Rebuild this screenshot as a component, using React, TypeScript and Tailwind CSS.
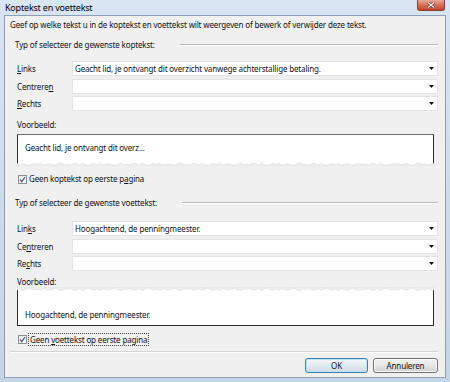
import React from "react";

function Arrow() {
  return (
    <svg width="5" height="3" viewBox="0 0 5 3" className="shrink-0">
      <path d="M0 0H5L2.5 3Z" fill="#111" />
    </svg>
  );
}

function Combo({ value }: { value?: string }) {
  return (
    <div className="flex h-[15px] flex-1 items-center bg-white border border-[#e4e4e4] pl-[2px] pr-[3px]">
      <span className="flex-1 truncate">{value}</span>
      <Arrow />
    </div>
  );
}

function Row({ label, value, className = "" }: { label: React.ReactNode; value?: string; className?: string }) {
  return (
    <div className={"flex items-center h-[15px] " + className}>
      <div className="w-[67px] pl-[12px]">{label}</div>
      <Combo value={value} />
    </div>
  );
}

function U({ children }: { children: React.ReactNode }) {
  return <span className="underline underline-offset-[1px]">{children}</span>;
}

function Check() {
  return (
    <div className="w-[9px] h-[9px] border border-[#8e8f8f] bg-gradient-to-br from-[#e9e9e9] to-[#ffffff] flex items-center justify-center shrink-0">
      <svg width="7" height="7" viewBox="0 0 7 7">
        <path d="M1 3.5L2.8 5.6L6 1" stroke="#4a5f97" strokeWidth="1.3" fill="none" />
      </svg>
    </div>
  );
}

const tornPts: number[] = [2, 0.5, 2.5, 1, 0, 1.5, 2, 1, 2.5, 0.5, 1.5, 2, 1, 0, 2, 2.5, 1, 1.5, 0.5, 2];

function Torn({ top }: { top?: boolean }) {
  const w = 420;
  const n = 140;
  let d = top ? `M0 0 H${w} V2 ` : `M0 5 H${w} V3 `;
  for (let i = n; i >= 0; i--) {
    const x = (i / n) * w;
    const j = tornPts[i % tornPts.length];
    const y = top ? 1 + j : 2 + (2.5 - j);
    d += `L${x.toFixed(1)} ${y.toFixed(1)} `;
  }
  d += "Z";
  return (
    <svg
      width="100%"
      height="5"
      viewBox={`0 0 ${w} 5`}
      preserveAspectRatio="none"
      className={"absolute left-[-1px] w-[calc(100%+2px)] " + (top ? "top-[-1px]" : "bottom-[-1px]")}
    >
      <path d={d} fill="#f0f0f0" stroke="#d8d8d8" strokeWidth="0.5" />
    </svg>
  );
}

export default function App() {
  return (
    <div className="relative w-[450px] h-[382px] flex flex-col bg-gradient-to-b from-[#d9e5f2] via-[#cfdcea] to-[#c6d5e6] text-[8px] leading-[10px] text-[#111] font-['Noto_Sans',sans-serif] tracking-[-0.15px] overflow-hidden">
      <div className="h-[15px] flex items-center pl-[5px] text-[9px] tracking-[-0.2px] text-black">
        Koptekst en voettekst
      </div>
      <div className="absolute top-0 left-[417px] w-[28px] h-[11px] rounded-b-[3px] border border-t-0 border-[#8a3a2a] bg-gradient-to-b from-[#e8a898] via-[#d46f5a] to-[#c0452e] flex items-center justify-center">
        <svg width="8" height="6" viewBox="0 0 8 6">
          <path d="M1 0.5L7 5.5M7 0.5L1 5.5" stroke="#5a1e14" strokeWidth="2.4" />
          <path d="M1 0.5L7 5.5M7 0.5L1 5.5" stroke="#fff" strokeWidth="1.3" />
        </svg>
      </div>
      <div className="flex-1 flex px-[4px] pb-[4px]">
        <div className="flex-1 flex flex-col border border-[#8c9fb6] bg-[#f0f0f0] pr-[7px]">
          <div className="mt-[4px] h-[10px] pl-[5px] whitespace-nowrap">
            Geef op welke tekst u in de koptekst en voettekst wilt weergeven of bewerk of verwijder deze tekst.
          </div>

          <div className="mt-[10px] h-[10px] flex items-center pl-[10px]">
            <span className="whitespace-nowrap">Typ of selecteer de gewenste koptekst:</span>
            <div className="ml-[25px] flex-1 h-[2px] border-t border-[#b9b9b9] border-b-white border-b" />
          </div>

          <Row className="mt-[11px]" label={<><U>L</U>inks</>} value="Geacht lid, je ontvangt dit overzicht vanwege achterstallige betaling." />
          <Row className="mt-[3px]" label={<>Centrere<U>n</U></>} />
          <Row className="mt-[2px]" label={<><U>R</U>echts</>} />

          <div className="mt-[9px] h-[10px] pl-[12px]">Voorbeeld:</div>

          <div className="relative mt-[4px] ml-[12px] mr-[4px] h-[31px] bg-white border border-b-0 border-[#2a2a2a] border-t-[#6d6d6d] pl-[7px] pt-[8px]">
            Geacht lid, je ontvangt dit overz...
            <Torn />
          </div>

          <div className="mt-[9px] h-[10px] pl-[13px] flex items-center gap-[2px]">
            <Check />
            <span>Geen koptekst op eerste p<U>a</U>gina</span>
          </div>

          <div className="mt-[14px] h-[10px] flex items-center pl-[10px]">
            <span className="whitespace-nowrap">Typ of selecteer de gewenste voettekst:</span>
            <div className="ml-[25px] flex-1 h-[2px] border-t border-[#b9b9b9] border-b-white border-b" />
          </div>

          <Row className="mt-[13px]" label={<>Lin<U>k</U>s</>} value="Hoogachtend, de penningmeester." />
          <Row className="mt-[3px]" label={<>Ce<U>n</U>treren</>} />
          <Row className="mt-[2px]" label={<>Re<U>c</U>hts</>} />

          <div className="mt-[6px] h-[10px] pl-[12px]">Voorbeeld:</div>

          <div className="relative mt-[1px] ml-[12px] mr-[4px] h-[38px] bg-white border border-t-0 border-[#2a2a2a] pl-[7px] pt-[22px]">
            Hoogachtend, de penningmeester.
            <Torn top />
          </div>

          <div className="mt-[7px] h-[13px] pl-[13px] flex items-center gap-[1px]">
            <Check />
            <span className="border border-dotted border-[#444] px-[1px] h-[13px] flex items-center">
              <span>Geen <U>v</U>oettekst op eerste pagina</span>
            </span>
          </div>

          <div className="mt-[5px] ml-[5px] h-[2px] border-t border-[#d5d5d5] border-b border-b-white" />

          <div className="mt-[5px] flex justify-end gap-[5px]">
            <div className="w-[63px] h-[15px] rounded-[3px] border border-[#3c7fb1] bg-gradient-to-b from-[#f4f8fb] via-[#e3ebf1] to-[#cfd9e2] flex items-center justify-center shadow-[inset_0_0_0_1px_#bfe3f8]">
              OK
            </div>
            <div className="w-[65px] h-[15px] rounded-[3px] border border-[#707070] bg-gradient-to-b from-[#f2f2f2] via-[#e6e6e6] to-[#d0d0d0] flex items-center justify-center shadow-[inset_0_0_0_1px_#fbfbfb]">
              Annuleren
            </div>
          </div>
        </div>
      </div>
    </div>
  );
}
